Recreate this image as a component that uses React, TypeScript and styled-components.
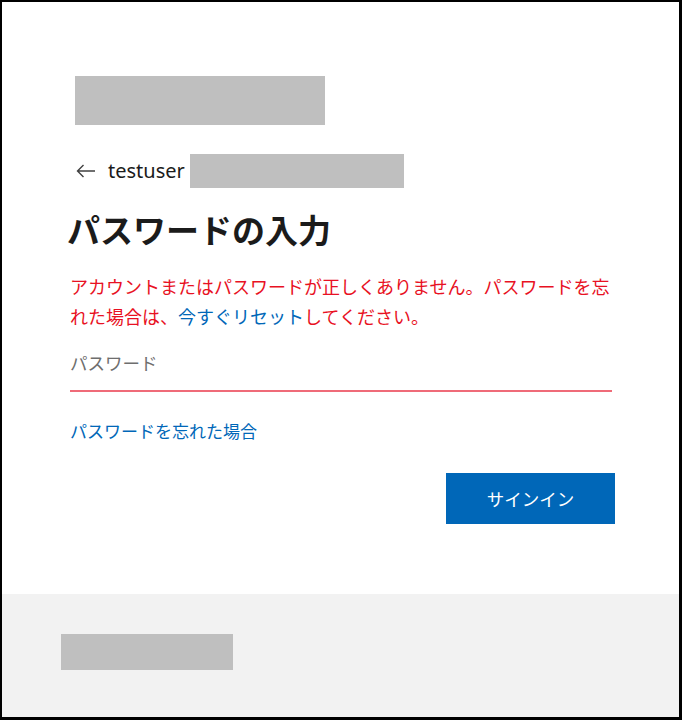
import styled, { createGlobalStyle } from 'styled-components';

const GlobalStyle = createGlobalStyle`
  html, body {
    margin: 0;
    padding: 0;
    background: #ffffff;
  }
  * {
    box-sizing: border-box;
  }
`;

const App = () => {
  return (
    <>
      <GlobalStyle />
      <St.Frame>
        <St.Main>
          <St.Redacted $width={250} $height={49} $offset={5} />

          <St.BackRow>
            <St.BackArrow width="20" height="14" viewBox="0 0 20 14" aria-hidden>
              <path d="M19 7H1.5M7.5 1L1.5 7l6 6" fill="none" stroke="#404040" strokeWidth="1.4" />
            </St.BackArrow>
            <St.UserName>testuser</St.UserName>
            <St.Redacted $width={214} $height={34} />
          </St.BackRow>

          <St.Title>パスワードの入力</St.Title>

          <St.ErrorText>
            アカウントまたはパスワードが正しくありません。パスワードを忘れた場合は、
            <St.InlineLink href="#">今すぐリセット</St.InlineLink>
            してください。
          </St.ErrorText>

          <St.PasswordInput type="password" placeholder="パスワード" autoFocus />

          <St.ForgotLink href="#">パスワードを忘れた場合</St.ForgotLink>

          <St.ButtonRow>
            <St.SignInButton type="button">サインイン</St.SignInButton>
          </St.ButtonRow>
        </St.Main>

        <St.Footer>
          <St.Redacted $width={172} $height={36} />
        </St.Footer>
      </St.Frame>
    </>
  );
};

export default App;

const FONT = `"Segoe UI", "Noto Sans", "Noto Sans CJK JP", sans-serif`;

const St = {
  Frame: styled.div`
    display: flex;
    flex-direction: column;

    width: 682px;
    height: 720px;

    border-style: solid;
    border-color: #000000;
    border-width: 2px 3px 3px 2px;
    background: #ffffff;
    font-family: ${FONT};
  `,

  Main: styled.main`
    display: flex;
    flex: 1;
    flex-direction: column;

    padding: 74px 0 0 68px;
  `,

  Redacted: styled.div<{ $width: number; $height: number; $offset?: number }>`
    flex-shrink: 0;
    width: ${({ $width }) => $width}px;
    height: ${({ $height }) => $height}px;
    margin-left: ${({ $offset }) => $offset ?? 0}px;
    background: #bfbfbf;
  `,

  BackRow: styled.div`
    display: flex;
    align-items: center;

    height: 34px;
    margin-top: 29px;
    padding-left: 6px;
  `,

  BackArrow: styled.svg`
    flex-shrink: 0;
    margin-right: 12px;
  `,

  UserName: styled.span`
    flex-shrink: 0;
    width: 82px;
    white-space: nowrap;

    color: #1b1b1b;
    font-size: 20px;
    line-height: 34px;
  `,

  Title: styled.h1`
    margin: 22px 0 0 -3px;

    color: #1b1b1b;
    font-size: 33px;
    font-weight: 700;
    line-height: 42px;
  `,

  ErrorText: styled.p`
    width: 545px;
    margin: 20px 0 0;

    color: #e81123;
    font-size: 18px;
    line-height: 30px;
  `,

  InlineLink: styled.a`
    color: #0067b8;
    text-decoration: none;
  `,

  PasswordInput: styled.input`
    width: 542px;
    height: 44px;
    margin-top: 16px;
    padding: 0 0 12px;

    border: none;
    border-bottom: 2px solid #ef6b78;
    outline: none;
    background: transparent;
    caret-color: #000000;

    color: #1b1b1b;
    font-family: ${FONT};
    font-size: 17.5px;
    line-height: 30px;

    &::placeholder {
      color: #6e6e6e;
    }
  `,

  ForgotLink: styled.a`
    align-self: flex-start;
    margin-top: 28px;

    color: #0067b8;
    font-size: 17px;
    line-height: 24px;
    text-decoration: none;
  `,

  ButtonRow: styled.div`
    display: flex;
    justify-content: flex-end;

    width: 545px;
    margin-top: 29px;
  `,

  SignInButton: styled.button`
    width: 169px;
    height: 51px;

    border: none;
    background: #0067b8;

    color: #ffffff;
    font-family: ${FONT};
    font-size: 17.5px;
  `,

  Footer: styled.footer`
    display: flex;
    flex-shrink: 0;

    height: 123px;
    padding: 40px 0 0 59px;

    background: #f2f2f2;
  `,
};
